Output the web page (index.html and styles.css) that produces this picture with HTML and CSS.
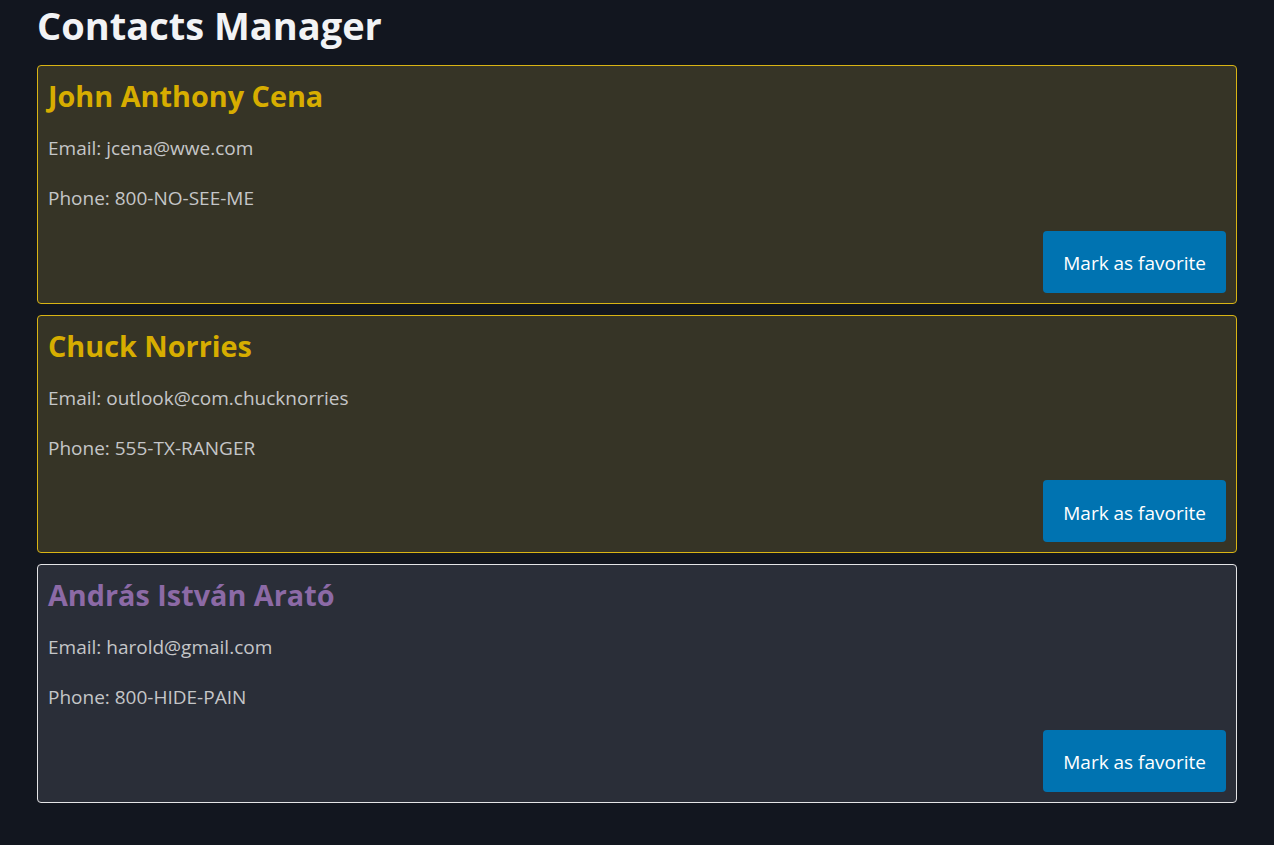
FILE: index.html
```html
<!DOCTYPE html>
<html lang="en">
<head>
<meta charset="utf-8">
<title>Contacts Manager</title>
<link rel="stylesheet" href="styles.css">
</head>
<body>
<main class="app">
  <h1 class="title">Contacts Manager</h1>
  <section class="contacts">
    <article class="card card--favorite">
      <h2 class="card__name">John Anthony Cena</h2>
      <p class="card__line">Email: jcena@wwe.com</p>
      <p class="card__line">Phone: 800-NO-SEE-ME</p>
      <div class="card__actions"><button class="btn">Mark as favorite</button></div>
    </article>
    <article class="card card--favorite">
      <h2 class="card__name">Chuck Norries</h2>
      <p class="card__line">Email: outlook@com.chucknorries</p>
      <p class="card__line">Phone: 555-TX-RANGER</p>
      <div class="card__actions"><button class="btn">Mark as favorite</button></div>
    </article>
    <article class="card">
      <h2 class="card__name">András István Arató</h2>
      <p class="card__line">Email: harold@gmail.com</p>
      <p class="card__line">Phone: 800-HIDE-PAIN</p>
      <div class="card__actions"><button class="btn">Mark as favorite</button></div>
    </article>
  </section>
</main>
</body>
</html>
```

FILE: styles.css
```css
* { box-sizing: border-box; }
html, body {
  margin: 0;
  background: #12161f;
}
body {
  font-family: "Open Sans", "Noto Sans", sans-serif;
  color: #c5c6c8;
}
.app {
  max-width: 1200px;
  margin: 0 auto;
}
.title {
  margin: 0 0 15px;
  height: 50px;
  line-height: 50px;
  font-size: 38px;
  font-weight: 700;
  color: #f2f3f5;
}
.contacts {
  display: flex;
  flex-direction: column;
  gap: 11px;
}
.card {
  display: flex;
  flex-direction: column;
  padding: 10px;
  border: 1px solid #e4e4e6;
  border-radius: 4px;
  background: #2a2e38;
}
.card--favorite {
  border-color: #d9b414;
  background: #363426;
}
.card__name {
  margin: 0 0 13px;
  line-height: 40px;
  font-size: 28.8px;
  font-weight: 700;
  color: #8c6aa6;
}
.card--favorite .card__name { color: #d7ad00; }
.card__line {
  margin: 0 0 12px;
  line-height: 38px;
  font-size: 19px;
}
.card__line:last-of-type { margin-bottom: 13.5px; }
.card__actions {
  display: flex;
  justify-content: flex-end;
}
.btn {
  height: 62px;
  padding: 3px 20px 0;
  border: 0;
  border-radius: 4px;
  background: #0073b1;
  color: #ffffff;
  font-family: inherit;
  font-size: 19px;
}
```
